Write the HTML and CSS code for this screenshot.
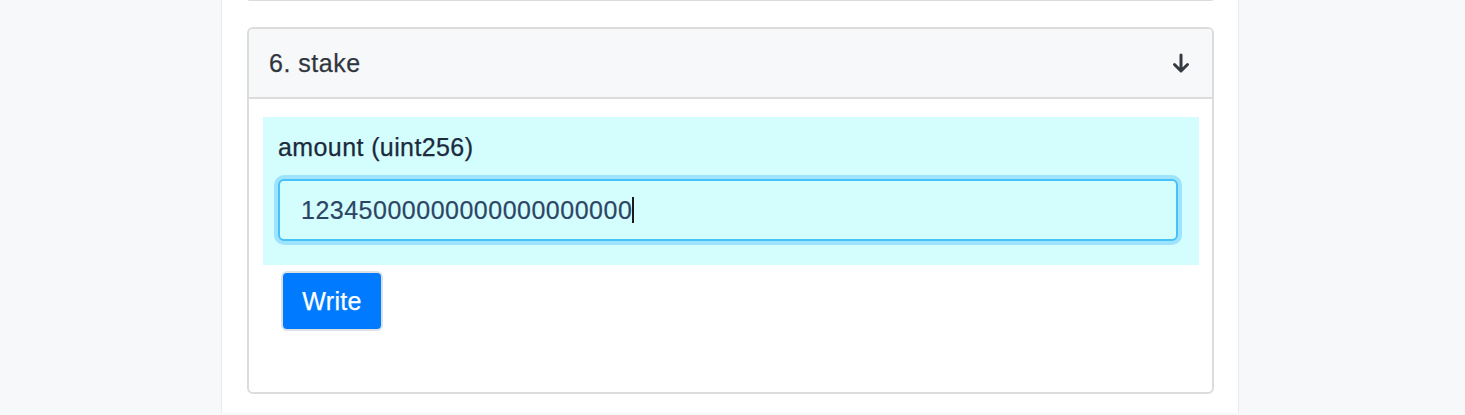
FILE: index.html
```html
<!DOCTYPE html>
<html lang="en">
<head>
<meta charset="utf-8">
<title>stake</title>
<link rel="stylesheet" href="styles.css">
</head>
<body>
<div class="panel">
  <div class="prev-card"></div>
  <div class="card">
    <div class="card-header">
      <span class="title">6. stake</span>
      <svg class="arrow" width="20" height="21" viewBox="0 0 20 21" aria-hidden="true">
        <path d="M10 2 V18 M3.5 11.5 L10 18 L16.5 11.5" fill="none" stroke="#343a40" stroke-width="3" stroke-linecap="round" stroke-linejoin="round"/>
      </svg>
    </div>
    <div class="card-body">
      <div class="field">
        <div class="label">amount (uint256)</div>
        <div class="input"><span class="value">12345000000000000000000</span><span class="caret"></span></div>
      </div>
      <button class="btn">Write</button>
    </div>
  </div>
</div>
</body>
</html>
```
FILE: styles.css
```css
html, body {
  margin: 0;
  padding: 0;
  background: #f7f8fa;
  font-family: "Liberation Sans", Arial, sans-serif;
}
body {
  height: 415px;
  overflow: hidden;
}
.panel {
  margin-left: 221px;
  width: 1018px;
  height: 415px;
  background: #ffffff;
  border-left: 1px solid #e9e9f2;
  border-right: 1px solid #e9e9f2;
  padding: 0 24px 0 25px;
  box-sizing: border-box;
}
.prev-card {
  height: 1px;
  border: 2px solid #dcdcdc;
  border-top: none;
  border-left-color: #e6e6e6;
  border-right-color: #e6e6e6;
  border-radius: 0 0 6px 6px;
  margin-top: -2px;
}
.card {
  margin-top: 26px;
  border: 2px solid #dcdcdc;
  border-radius: 6px;
  overflow: hidden;
}
.card-header {
  height: 68px;
  padding: 0 21px 0 20px;
  display: flex;
  align-items: center;
  justify-content: space-between;
  background: #f7f8fa;
  border-bottom: 2px solid #dcdcdc;
}
.title {
  font-size: 25px;
  letter-spacing: 0.5px;
  color: #30363d;
  -webkit-text-stroke: 0.25px #30363d;
}
.arrow {
  display: block;
}
.card-body {
  padding: 18px 13px 61px 14px;
}
.field {
  background: #d4fdfe;
  padding: 12px 21px 24px 15px;
}
.label {
  font-size: 25px;
  line-height: 36px;
  letter-spacing: 0.4px;
  color: #1b2a3c;
  -webkit-text-stroke: 0.25px #1b2a3c;
}
.input {
  margin-top: 14px;
  height: 62px;
  box-sizing: border-box;
  border: 2px solid #45c2fa;
  border-radius: 6px;
  box-shadow: 0 0 0 4px #9fe3ff;
  padding: 0 21px;
  display: flex;
  align-items: center;
  background: #d4fdfe;
}
.value {
  font-size: 25px;
  letter-spacing: 0.5px;
  color: #2d4565;
  -webkit-text-stroke: 0.2px #2d4565;
}
.caret {
  display: inline-block;
  width: 2px;
  height: 26px;
  background: #1b1b1b;
}
.btn {
  display: block;
  margin: 6px 0 0 18px;
  width: 102px;
  height: 60px;
  box-sizing: border-box;
  background: #007bff;
  color: #ffffff;
  border: 2px solid #dde1e6;
  border-radius: 6px;
  font-family: "Liberation Sans", Arial, sans-serif;
  font-size: 25px;
  letter-spacing: 0.3px;
  -webkit-text-stroke: 0.25px #ffffff;
  padding: 0;
}
```
